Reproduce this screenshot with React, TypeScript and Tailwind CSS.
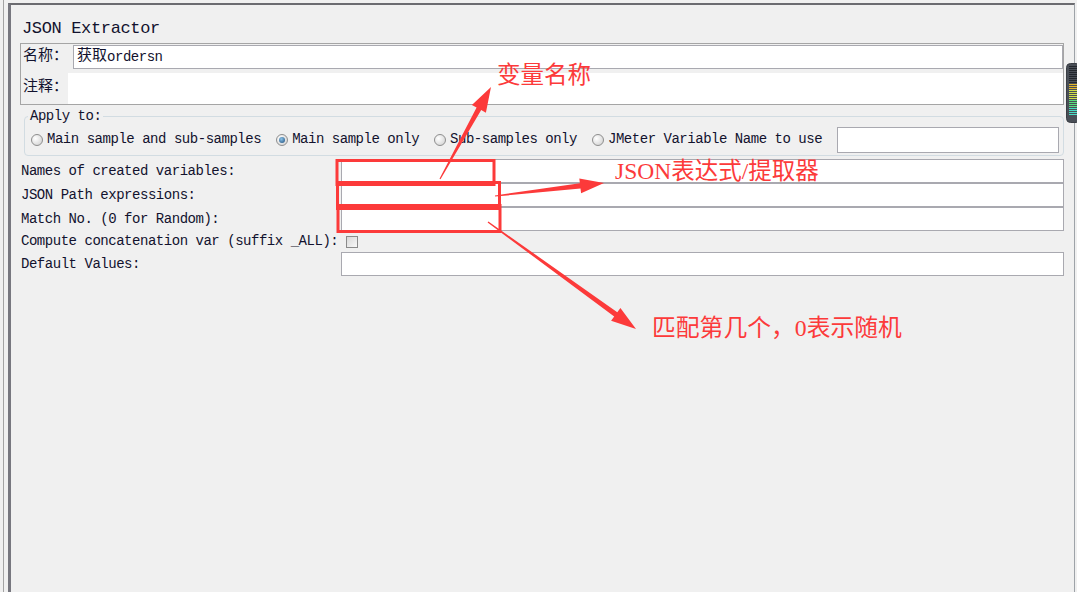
import React from "react";

// tapered annotation arrow: thin tail, wide head
function arrowPoints(x0: number, y0: number, x1: number, y1: number, L = 24, W = 8, t0 = 0.6, t1 = 2.6) {
  const dx = x1 - x0;
  const dy = y1 - y0;
  const len = Math.hypot(dx, dy);
  const ux = dx / len;
  const uy = dy / len;
  const nx = -uy;
  const ny = ux;
  const bx = x1 - ux * L;
  const by = y1 - uy * L;
  const p = (x: number, y: number) => `${x.toFixed(1)},${y.toFixed(1)}`;
  return [
    p(x0 + nx * t0, y0 + ny * t0),
    p(bx + nx * t1, by + ny * t1),
    p(bx + nx * W, by + ny * W),
    p(x1, y1),
    p(bx - nx * W, by - ny * W),
    p(bx - nx * t1, by - ny * t1),
    p(x0 - nx * t0, y0 - ny * t0),
  ].join(" ");
}

function Radio({ checked = false }: { checked?: boolean }) {
  return (
    <span className="w-[12px] h-[12px] shrink-0 rounded-full border border-[#8e8e8e] bg-[radial-gradient(circle_at_35%_35%,#ffffff,#cdcdcd)] flex items-center justify-center">
      {checked && (
        <span className="w-[6px] h-[6px] rounded-full bg-[radial-gradient(circle_at_40%_35%,#8cc4ea,#1b4a78)]" />
      )}
    </span>
  );
}

function Option({ label, checked = false }: { label: string; checked?: boolean }) {
  return (
    <div className="shrink-0 flex items-center gap-[4px] whitespace-nowrap">
      <Radio checked={checked} />
      <span>{label}</span>
    </div>
  );
}

function Field() {
  return <div className="shrink-0 w-[723px] h-[24px] bg-white border border-[#a9a9b0]" />;
}

function Meter() {
  const rows = [];
  for (let i = 0; i < 25; i++) {
    const y = 3 + i * 2;
    let c = "#23272d";
    if (y >= 21) c = "#e2b72a";
    if (y >= 27) c = "#cfe04a";
    if (y >= 37) c = "#58de7c";
    if (y >= 45) c = "#49dcc4";
    rows.push(<rect key={i} x={3} y={y} width={8} height={1} fill={c} />);
  }
  return (
    <svg width="12" height="60" viewBox="0 0 12 60" className="block">
      <rect x="0.5" y="0.5" width="14" height="59" rx="4" fill="#4a4f57" stroke="#3a3e44" />
      {rows}
    </svg>
  );
}

export default function App() {
  const mono = "font-['Liberation_Mono','Noto_Sans_CJK_SC',monospace]";
  const note = "absolute whitespace-nowrap text-[#fc3a3a] font-['Liberation_Serif','Noto_Sans_CJK_SC',serif]";
  return (
    <div className={`relative w-[1077px] h-[592px] overflow-hidden bg-[#f0f0f0] flex text-[#12122e] ${mono}`}>
      <div className="w-[3px] shrink-0" />
      <div className="w-px shrink-0 bg-[#a3a3a3]" />
      <div className="w-[4px] shrink-0" />

      <div className="flex-1 pt-[3px] flex flex-col">
        <div className="flex-1 border-t-2 border-l-[3px] border-r border-t-[#6b6b70] border-l-[#77777f] border-r-[#9ea3a8] flex flex-col">
          {/* Title */}
          <div className="h-[38px] pt-[10px] pl-[11px] flex items-center text-[17px] tracking-[-0.35px] whitespace-nowrap">
            JSON Extractor
          </div>

          {/* Name / comment box */}
          <div className="ml-[9px] w-[1044px] h-[62px] border border-[#a5a5a5] flex flex-col">
            <div className="h-[29px] pt-[1px] flex items-start">
              <div className="shrink-0 w-[52px] h-[24px] pl-[2px] flex items-center text-[15px] whitespace-nowrap">名称：</div>
              <div className="flex-1 h-[24px] bg-white border border-[#a9a9b0] pl-[3px] flex items-center text-[14px] tracking-[-0.47px] whitespace-nowrap">
                <span className="text-[15px] tracking-normal">获取</span>ordersn
              </div>
            </div>
            <div className="flex-1 flex">
              <div className="shrink-0 w-[47px] pl-[2px] flex items-center text-[15px] whitespace-nowrap">注释：</div>
              <div className="flex-1 bg-white" />
            </div>
          </div>

          {/* Apply to */}
          <fieldset className="mt-[3px] ml-[13px] w-[1038px] border border-[#d2dce2] rounded-[4px] text-[14px] tracking-[-0.47px]">
            <legend className="ml-[3px] px-[2px] h-[16px] leading-[16px] whitespace-nowrap">Apply to:</legend>
            <div className="h-[31px] pl-[6px] pr-[4px] flex items-center gap-[15px]">
              <Option label="Main sample and sub-samples" />
              <Option label="Main sample only" checked />
              <Option label="Sub-samples only" />
              <Option label="JMeter Variable Name to use" />
              <div className="ml-auto shrink-0 w-[222px] h-[26px] bg-white border border-[#a9a9b0]" />
            </div>
          </fieldset>

          {/* Extractor fields */}
          <div className="mt-[3px] flex flex-col text-[14px] tracking-[-0.47px] whitespace-nowrap">
            <div className="flex h-[24px]">
              <div className="shrink-0 w-[330px] pl-[10px] flex items-center">Names of created variables:</div>
              <Field />
            </div>
            <div className="flex h-[24px]">
              <div className="shrink-0 w-[330px] pl-[10px] flex items-center">JSON Path expressions:</div>
              <Field />
            </div>
            <div className="flex h-[24px]">
              <div className="shrink-0 w-[330px] pl-[10px] flex items-center">Match No. (0 for Random):</div>
              <Field />
            </div>
            <div className="flex h-[21px] items-center pl-[10px]">
              <span>Compute concatenation var (suffix _ALL):</span>
              <span className="ml-[8px] w-[12px] h-[12px] border border-[#8a8a8a] bg-[linear-gradient(135deg,#d8d8d8,#f8f8f8)]" />
            </div>
            <div className="flex h-[24px]">
              <div className="shrink-0 w-[330px] pl-[10px] flex items-center">Default Values:</div>
              <Field />
            </div>
          </div>
        </div>
      </div>
      <div className="w-[2px] shrink-0" />

      {/* level meter on the right edge */}
      <div className="absolute left-[1066px] top-[63px]">
        <Meter />
      </div>

      {/* red annotations */}
      <svg className="absolute inset-0 pointer-events-none" width="1077" height="592" viewBox="0 0 1077 592">
        <g fill="none" stroke="#fc3a3a" strokeWidth="3">
          <rect x="337" y="160.5" width="157" height="24" />
          <rect x="337.5" y="182.5" width="162" height="26" />
          <rect x="338" y="205.5" width="162" height="26" />
        </g>
        <g fill="#fc3a3a">
          <polygon points={arrowPoints(440, 179, 491, 87, 25, 8)} />
          <polygon points={arrowPoints(495, 196, 604, 183, 24, 7.5)} />
          <polygon points={arrowPoints(488, 222, 636, 329, 25, 8)} />
        </g>
      </svg>
      <div className={`${note} left-[497px] top-[63px] text-[23.5px] leading-[24px]`}>变量名称</div>
      <div className={`${note} left-[615px] top-[159px] text-[23.5px] leading-[24px]`}>JSON表达式/提取器</div>
      <div className={`${note} left-[652px] top-[316px] text-[23.8px] leading-[24px]`}>匹配第几个，0表示随机</div>
    </div>
  );
}
